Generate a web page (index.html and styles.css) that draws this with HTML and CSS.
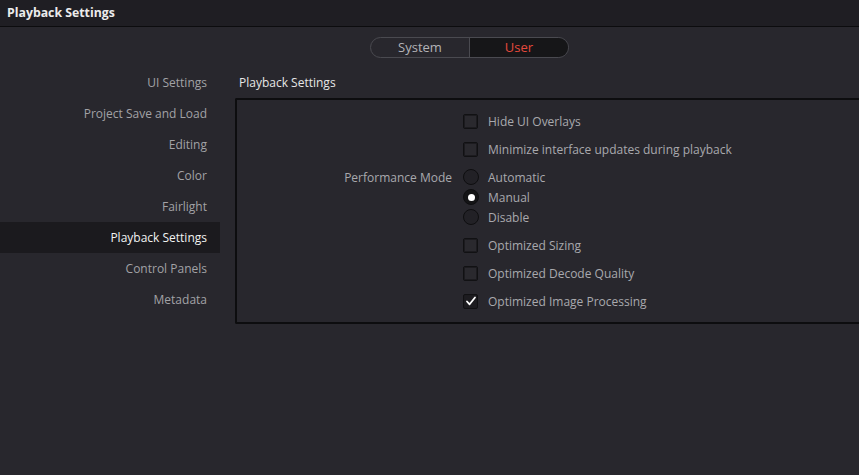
FILE: index.html
```html
<!DOCTYPE html>
<html>
<head>
<meta charset="utf-8">
<link rel="stylesheet" href="styles.css">
</head>
<body>
<div class="titlebar">Playback Settings</div>
<div class="tabs-row">
  <div class="seg">
    <div class="seg-btn">System</div>
    <div class="seg-btn active">User</div>
  </div>
</div>
<div class="main">
  <nav class="sidebar">
    <div class="nav-item">UI Settings</div>
    <div class="nav-item">Project Save and Load</div>
    <div class="nav-item">Editing</div>
    <div class="nav-item">Color</div>
    <div class="nav-item">Fairlight</div>
    <div class="nav-item selected">Playback Settings</div>
    <div class="nav-item">Control Panels</div>
    <div class="nav-item">Metadata</div>
  </nav>
  <section class="content">
    <div class="section-title">Playback Settings</div>
    <div class="panel">
      <div class="grid">
        <div class="lbl"></div>
        <div class="opt"><span class="box"></span>Hide UI Overlays</div>
        <div class="lbl"></div>
        <div class="opt"><span class="box"></span>Minimize interface updates during playback</div>
        <div class="lbl pm">Performance Mode</div>
        <div class="radios">
          <div class="opt r"><span class="radio"></span>Automatic</div>
          <div class="opt r"><span class="radio on"></span>Manual</div>
          <div class="opt r"><span class="radio"></span>Disable</div>
        </div>
        <div class="lbl"></div>
        <div class="opt"><span class="box"></span>Optimized Sizing</div>
        <div class="lbl"></div>
        <div class="opt"><span class="box"></span>Optimized Decode Quality</div>
        <div class="lbl"></div>
        <div class="opt"><span class="box checked"><svg width="12" height="12" viewBox="0 0 12 12"><path d="M2 6.5 L4.6 9.3 L10 2.5" fill="none" stroke="#ffffff" stroke-width="1.8" stroke-linecap="round" stroke-linejoin="round"/></svg></span>Optimized Image Processing</div>
      </div>
    </div>
  </section>
</div>
</body>
</html>
```
FILE: styles.css
```css
* { box-sizing: border-box; }
html, body { margin: 0; padding: 0; }
body {
  width: 859px;
  height: 475px;
  overflow: hidden;
  background: #28272d;
  font-family: "Open Sans", "Noto Sans", sans-serif;
  font-size: 12px;
  color: #a9a9ad;
}
.titlebar {
  height: 27px;
  background: #1f1e23;
  border-bottom: 1px solid #0c0c0e;
  color: #ececec;
  font-weight: 700;
  font-size: 12.3px;
  padding: 4px 0 0 7px;
}
.tabs-row {
  display: flex;
  justify-content: center;
  padding-top: 10px;
  padding-left: 80px;
}
.seg {
  display: flex;
  width: 199px;
  height: 21px;
  border: 1px solid #4a4a50;
  border-radius: 11px;
  overflow: hidden;
}
.seg-btn {
  flex: 1;
  text-align: center;
  line-height: 19px;
  font-size: 13px;
  color: #b3b3b7;
}
.seg-btn + .seg-btn { border-left: 1px solid #4a4a50; }
.seg-btn.active { background: #161618; color: #e5493c; }
.main {
  display: flex;
  padding-top: 9px;
}
.sidebar {
  width: 220px;
  display: flex;
  flex-direction: column;
}
.nav-item {
  height: 31px;
  line-height: 31px;
  text-align: right;
  padding-right: 13px;
  font-size: 12px;
  color: #a2a2a6;
}
.nav-item.selected { background: #1b1a1e; color: #f2f2f2; }
.content {
  flex: 1;
  padding-left: 15px;
}
.section-title {
  height: 31px;
  line-height: 31px;
  padding-left: 4px;
  font-size: 12px;
  color: #e6e6e6;
}
.panel {
  border: 2px solid #0d0d0f;
  border-right: none;
  height: 226px;
  margin-right: -2px;
  border-radius: 2px 0 0 2px;
  padding-top: 7px;
}
.grid {
  display: grid;
  grid-template-columns: 226px 1fr;
  column-gap: 0;
}
.lbl {
  text-align: right;
  padding-right: 11px;
  line-height: 20px;
  font-size: 12px;
  color: #a9a9ad;
}
.lbl.pm { padding-top: 5px; }
.opt {
  display: flex;
  align-items: center;
  height: 28px;
  font-size: 12px;
  color: #a9a9ad;
}
.radios { display: flex; flex-direction: column; padding: 4px 0; }
.opt.r { height: 20px; }
.box {
  width: 15px;
  height: 15px;
  border: 1px solid #111113;
  background: #2a292e;
  border-radius: 2px;
  margin-right: 10px;
  display: flex;
  align-items: center;
  justify-content: center;
  box-shadow: inset 0 0 0 1px #1c1b1f;
}
.box.checked { background: #1d1c20; }
.radio {
  width: 16px;
  height: 16px;
  border-radius: 50%;
  border: 1px solid #0e0e10;
  background: #222126;
  margin-right: 9px;
  display: flex;
  align-items: center;
  justify-content: center;
}
.radio.on { background: #141416; }
.radio.on::after {
  content: "";
  width: 7px;
  height: 7px;
  border-radius: 50%;
  background: #ffffff;
}
```
